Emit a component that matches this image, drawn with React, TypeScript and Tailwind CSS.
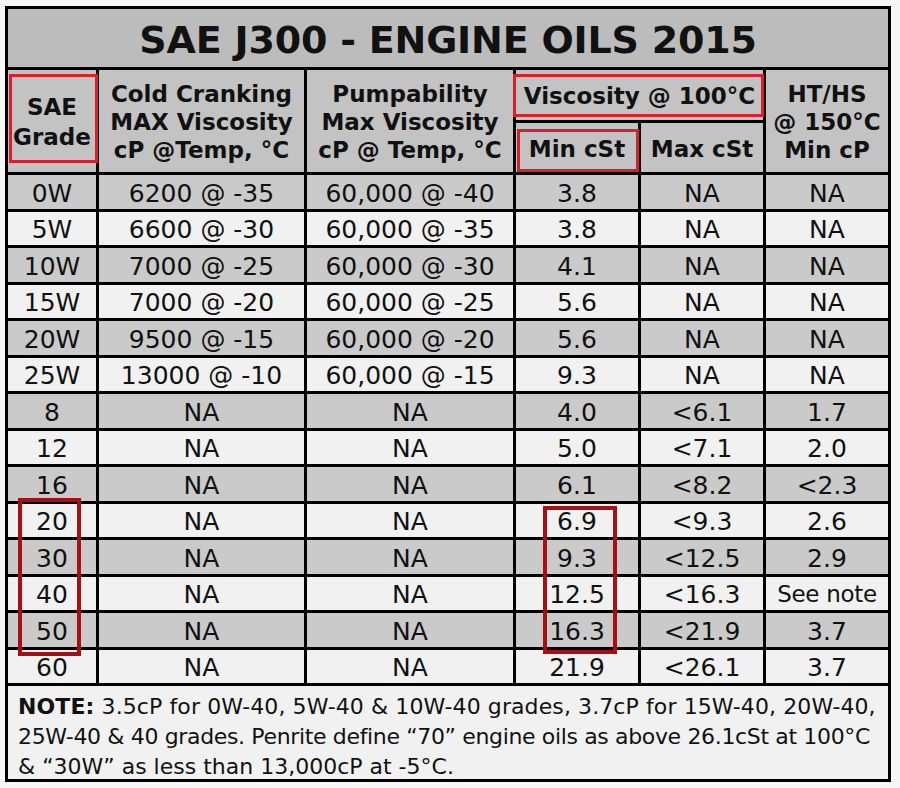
import React from "react";

const rows: string[][] = [
  ["0W", "6200 @ -35", "60,000 @ -40", "3.8", "NA", "NA"],
  ["5W", "6600 @ -30", "60,000 @ -35", "3.8", "NA", "NA"],
  ["10W", "7000 @ -25", "60,000 @ -30", "4.1", "NA", "NA"],
  ["15W", "7000 @ -20", "60,000 @ -25", "5.6", "NA", "NA"],
  ["20W", "9500 @ -15", "60,000 @ -20", "5.6", "NA", "NA"],
  ["25W", "13000 @ -10", "60,000 @ -15", "9.3", "NA", "NA"],
  ["8", "NA", "NA", "4.0", "<6.1", "1.7"],
  ["12", "NA", "NA", "5.0", "<7.1", "2.0"],
  ["16", "NA", "NA", "6.1", "<8.2", "<2.3"],
  ["20", "NA", "NA", "6.9", "<9.3", "2.6"],
  ["30", "NA", "NA", "9.3", "<12.5", "2.9"],
  ["40", "NA", "NA", "12.5", "<16.3", "See note"],
  ["50", "NA", "NA", "16.3", "<21.9", "3.7"],
  ["60", "NA", "NA", "21.9", "<26.1", "3.7"],
];

const font = { fontFamily: '"DejaVu Sans", Verdana, sans-serif' };

export default function App() {
  return (
    <div
      className="relative w-[900px] h-[788px] bg-[#f7f7f7] overflow-hidden text-[#111]"
      style={font}
    >
      <div className="ml-[5px] mt-[6px] w-[886px] border-[3px] border-black bg-black flex flex-col gap-[3px]">
        {/* Title */}
        <div className="h-[58px] bg-[#bcbcbc] flex items-center justify-center pt-[4px]">
          <span className="text-[38px] font-bold leading-none tracking-[-0.2px]">
            SAE J300 - ENGINE OILS 2015
          </span>
        </div>

        {/* Header */}
        <div className="grid grid-cols-[88px_205px_206px_122px_122px_122px] grid-rows-[50px_49px] gap-[3px] h-[102px] text-[23px] font-bold leading-[28px] text-center">
          <div className="row-span-2 bg-[#c3c3c3] flex items-center justify-center pt-[2px] leading-[30px]">
            <div>
              SAE
              <br />
              Grade
            </div>
          </div>
          <div className="row-span-2 bg-[#c3c3c3] flex items-center justify-center pt-[2px]">
            <div>
              Cold Cranking
              <br />
              MAX Viscosity
              <br />
              cP @Temp, °C
            </div>
          </div>
          <div className="row-span-2 bg-[#c3c3c3] flex items-center justify-center pt-[2px]">
            <div>
              Pumpability
              <br />
              Max Viscosity
              <br />
              cP @ Temp, °C
            </div>
          </div>
          <div className="col-span-2 bg-[#c3c3c3] flex items-center justify-center pt-[2px]">
            Viscosity @ 100°C
          </div>
          <div className="row-span-2 bg-[#c3c3c3] flex items-center justify-center pt-[2px]">
            <div>
              HT/HS
              <br />
              @ 150°C
              <br />
              Min cP
            </div>
          </div>
          <div className="bg-[#c3c3c3] flex items-center justify-center pt-[2px]">
            Min cSt
          </div>
          <div className="bg-[#c3c3c3] flex items-center justify-center pt-[2px]">
            Max cSt
          </div>
        </div>

        {/* Body */}
        <div className="grid grid-cols-[88px_205px_206px_122px_122px_122px] auto-rows-[33.5px] gap-[3px] text-[25px] leading-none text-center">
          {rows.map((r, i) =>
            r.map((c, j) => (
              <div
                key={`${i}-${j}`}
                className={`flex items-center justify-center pt-[3px] whitespace-nowrap ${
                  i % 2 === 0 ? "bg-[#cacaca]" : "bg-[#f1f1f1]"
                } ${c === "See note" ? "text-[23px] tracking-[-0.3px]" : ""}`}
              >
                {c}
              </div>
            ))
          )}
        </div>

        {/* Note */}
        <div className="h-[93px] bg-[#f1f1f1] px-[10px] pt-[6px] text-[22px] leading-[30px] whitespace-nowrap">
          <div className="tracking-[0.1px]">
            <span className="font-bold">NOTE:</span>{" "}
            <span>3.5cP for 0W-40, 5W-40 &amp; 10W-40 grades, 3.7cP for 15W-40, 20W-40,</span>
          </div>
          <div className="tracking-[-0.35px]">
            25W-40 &amp; 40 grades. Penrite define “70” engine oils as above 26.1cSt at 100°C
          </div>
          <div>&amp; “30W” as less than 13,000cP at -5°C.</div>
        </div>
      </div>

      {/* Red highlight boxes */}
      <div className="absolute left-[9px] top-[74px] w-[89px] h-[89px] border-[3px] border-[#d5232e]" />
      <div className="absolute left-[513px] top-[74px] w-[251px] h-[43px] border-[3px] border-[#d5232e]" />
      <div className="absolute left-[517px] top-[129px] w-[122px] h-[43px] border-[3px] border-[#d5232e]" />
      <div className="absolute left-[18px] top-[498px] w-[63px] h-[158px] border-[4px] border-[#a80f14]" />
      <div className="absolute left-[543px] top-[506px] w-[74px] h-[148px] border-[4px] border-[#a80f14]" />
    </div>
  );
}
